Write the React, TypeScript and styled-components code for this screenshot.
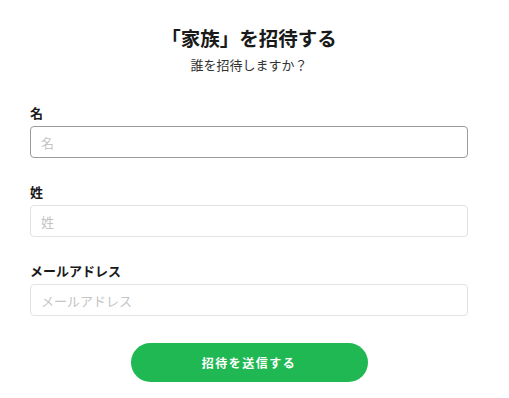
import React from "react";
import styled, { createGlobalStyle } from "styled-components";

const GlobalStyle = createGlobalStyle`
  html, body {
    margin: 0;
    padding: 0;
    background: #ffffff;
  }
  body {
    font-family: "Noto Sans CJK JP", "Noto Sans", "Liberation Sans", sans-serif;
    color: #222;
  }
`;

const Page = styled.div`
  width: 438px;
  padding: 24px 0 0 30px;
`;

const Header = styled.header`
  display: flex;
  flex-direction: column;
  align-items: center;
  margin-bottom: 28px;
`;

const Title = styled.h1`
  margin: 0;
  font-size: 19.5px;
  line-height: 28px;
  font-weight: 700;
  color: #1a1a1a;
`;

const Subtitle = styled.p`
  margin: 3px 0 0;
  font-size: 13px;
  line-height: 20px;
  color: #333;
`;

const Form = styled.form`
  display: flex;
  flex-direction: column;
  gap: 24px;
`;

const Field = styled.div`
  display: flex;
  flex-direction: column;
`;

const Label = styled.label`
  font-size: 13px;
  line-height: 20px;
  font-weight: 700;
  color: #1a1a1a;
  margin-bottom: 3px;
`;

const Input = styled.input<{ $active?: boolean }>`
  box-sizing: border-box;
  width: 100%;
  height: 32px;
  padding: 0 10px;
  border: 1px solid ${({ $active }) => ($active ? "#9a9a9a" : "#e2e2e2")};
  border-radius: 4px;
  font-family: inherit;
  font-size: 13px;
  color: #222;
  background: #fff;
  outline: none;
  &::placeholder {
    color: #c4c4c4;
  }
`;

const Actions = styled.div`
  display: flex;
  justify-content: center;
  margin-top: 3px;
`;

const SubmitButton = styled.button`
  width: 237px;
  height: 39px;
  border: none;
  border-radius: 20px;
  background: #1fb853;
  color: #fff;
  font-family: inherit;
  font-size: 12px;
  font-weight: 700;
  letter-spacing: 1.5px;
  cursor: pointer;
`;

const fields = [
  { id: "first", label: "名", active: true },
  { id: "last", label: "姓", active: false },
  { id: "email", label: "メールアドレス", active: false },
];

const App: React.FC = () => {
  return (
    <>
      <GlobalStyle />
      <Page>
        <Header>
          <Title>「家族」を招待する</Title>
          <Subtitle>誰を招待しますか？</Subtitle>
        </Header>
        <Form onSubmit={(e) => e.preventDefault()}>
          {fields.map((f) => (
            <Field key={f.id}>
              <Label htmlFor={f.id}>{f.label}</Label>
              <Input id={f.id} placeholder={f.label} $active={f.active} />
            </Field>
          ))}
          <Actions>
            <SubmitButton type="submit">招待を送信する</SubmitButton>
          </Actions>
        </Form>
      </Page>
    </>
  );
};

export default App;
